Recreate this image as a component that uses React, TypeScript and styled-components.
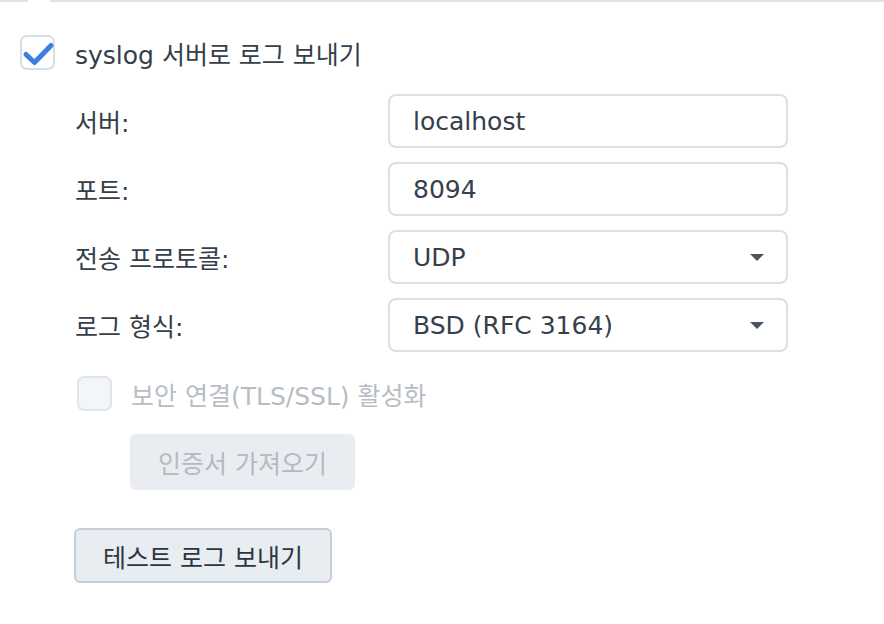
import React from "react";
import styled, { createGlobalStyle } from "styled-components";

const FONT = `"DejaVu Sans", "Noto Sans CJK KR", sans-serif`;

const Global = createGlobalStyle`
  html, body { margin: 0; padding: 0; background: #ffffff; }
  body { font-family: ${FONT}; }
`;

const Page = styled.div`
  position: relative;
  width: 884px;
  height: 624px;
  box-sizing: border-box;
  padding: 35px 0 0 20px;
  font-size: 25px;
`;

const TopRule = styled.div`
  position: absolute;
  top: 0;
  left: 0;
  right: 0;
  height: 2px;
  display: flex;
  gap: 22px;
  &::before, &::after { content: ""; height: 2px; background: #dce3ea; }
  &::before { width: 28px; }
  &::after { flex: 1; }
`;

const CheckRow = styled.label<{ $gap?: number }>`
  display: flex;
  align-items: center;
  gap: ${(p) => p.$gap ?? 20}px;
  height: 35px;
`;

const Box = styled.span<{ $disabled?: boolean }>`
  width: 35px;
  height: 35px;
  box-sizing: border-box;
  border: 2px solid ${(p) => (p.$disabled ? "#dfe5eb" : "#d6dee7")};
  border-radius: 7px;
  background: ${(p) => (p.$disabled ? "#f3f6f9" : "#ffffff")};
  display: flex;
  align-items: center;
  justify-content: center;
  flex: none;
  overflow: visible;
`;

const CheckText = styled.span<{ $disabled?: boolean }>`
  color: ${(p) => (p.$disabled ? "#b7bdc4" : "#353e49")};
`;

const Section = styled.div`
  margin-left: 55px;
  margin-top: 24px;
  display: grid;
  grid-template-columns: 313px 400px;
  row-gap: 14px;
  align-items: center;
`;

const Label = styled.div`
  color: #353e49;
`;

const Field = styled.div`
  height: 54px;
  box-sizing: border-box;
  border: 2px solid #d9e1e8;
  border-radius: 8px;
  display: flex;
  align-items: center;
  justify-content: space-between;
  padding: 0 22px 0 23px;
  color: #36404b;
  background: #fff;
`;

const Caret = styled.span`
  width: 0;
  height: 0;
  border-left: 7px solid transparent;
  border-right: 7px solid transparent;
  border-top: 7px solid #4a5462;
`;

const Tls = styled.div`
  margin: 24px 0 0 57px;
`;

const Button = styled.button<{ $disabled?: boolean }>`
  display: block;
  box-sizing: border-box;
  height: ${(p) => (p.$disabled ? 56 : 55)}px;
  padding: 0 ${(p) => (p.$disabled ? 28 : 27)}px;
  font-family: ${FONT};
  font-size: 25px;
  border-radius: 6px;
  border: ${(p) => (p.$disabled ? "none" : "2px solid #c6cdd5")};
  background: ${(p) => (p.$disabled ? "#e9edf1" : "#e8edf2")};
  color: ${(p) => (p.$disabled ? "#b4bac1" : "#2d3640")};
`;

const CertButton = styled(Button)`
  margin: 23px 0 0 110px;
`;

const TestButton = styled(Button)`
  margin: 38px 0 0 54px;
`;

const Check = () => (
  <svg width="35" height="35" viewBox="0 0 35 35" style={{ margin: -2, flex: "none" }}>
    <polyline
      points="6,19.5 14.5,27.5 31,10.5"
      fill="none"
      stroke="#3c7fe0"
      strokeWidth="5"
      strokeLinecap="round"
      strokeLinejoin="round"
    />
  </svg>
);

export default function App() {
  return (
    <>
      <Global />
      <Page>
        <TopRule />
        <CheckRow>
          <Box>
            <Check />
          </Box>
          <CheckText>syslog 서버로 로그 보내기</CheckText>
        </CheckRow>
        <Section>
          <Label>서버:</Label>
          <Field>localhost</Field>
          <Label>포트:</Label>
          <Field>8094</Field>
          <Label>전송 프로토콜:</Label>
          <Field>
            UDP
            <Caret />
          </Field>
          <Label>로그 형식:</Label>
          <Field>
            BSD (RFC 3164)
            <Caret />
          </Field>
        </Section>
        <Tls>
          <CheckRow $gap={19}>
            <Box $disabled />
            <CheckText $disabled>보안 연결(TLS/SSL) 활성화</CheckText>
          </CheckRow>
        </Tls>
        <CertButton $disabled disabled>
          인증서 가져오기
        </CertButton>
        <TestButton>테스트 로그 보내기</TestButton>
      </Page>
    </>
  );
}
